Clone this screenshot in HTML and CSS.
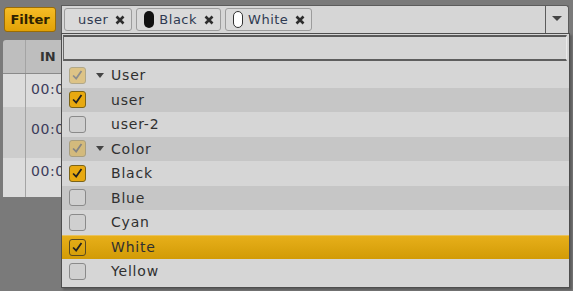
FILE: index.html
```html
<!DOCTYPE html>
<html>
<head>
    <title>Filter</title>
    <link rel="stylesheet" href="styles.css">
</head>
<body>
    <div class="topbar">
        <button class="filter-btn">Filter</button>
        <div class="select-box">
            <div class="tags">
                <span class="tag tag-plain">user <svg class="x" viewBox="0 0 10 10"><path d="M1.5 1.5L8.5 8.5M8.5 1.5L1.5 8.5"/></svg></span>
                <span class="tag"><i class="pill pill-black"></i>Black <svg class="x" viewBox="0 0 10 10"><path d="M1.5 1.5L8.5 8.5M8.5 1.5L1.5 8.5"/></svg></span>
                <span class="tag"><i class="pill pill-white"></i>White <svg class="x" viewBox="0 0 10 10"><path d="M1.5 1.5L8.5 8.5M8.5 1.5L1.5 8.5"/></svg></span>
            </div>
            <div class="arrow"><span class="tri"></span></div>
        </div>
    </div>

    <div class="grid">
        <div class="grid-head">
            <div class="c1"></div>
            <div class="c2">IN</div>
        </div>
        <div class="grid-row r1"><div class="c1"></div><div class="c2">00:00:00</div></div>
        <div class="grid-row r2"><div class="c1"></div><div class="c2">00:00:00</div></div>
        <div class="grid-row r3"><div class="c1"></div><div class="c2">00:00:00</div></div>
    </div>

    <!-- dropdown list, opened over the grid -->
    <div class="dropdown">
        <div class="search"></div>
        <div class="list">
            <div class="row"><span class="cb checked faded"></span><span class="caret"></span><span>User</span></div>
            <div class="row alt"><span class="cb checked"></span><span></span><span>user</span></div>
            <div class="row"><span class="cb"></span><span></span><span>user-2</span></div>
            <div class="row alt"><span class="cb checked faded"></span><span class="caret"></span><span>Color</span></div>
            <div class="row"><span class="cb checked"></span><span></span><span>Black</span></div>
            <div class="row alt"><span class="cb"></span><span></span><span>Blue</span></div>
            <div class="row"><span class="cb"></span><span></span><span>Cyan</span></div>
            <div class="row active"><span class="cb checked"></span><span></span><span>White</span></div>
            <div class="row"><span class="cb"></span><span></span><span>Yellow</span></div>
        </div>
    </div>
</body>
</html>
```

FILE: styles.css
```css
body {
    margin: 0;
    background-color: #7a7a7a;
    font-family: "DejaVu Sans", Verdana, sans-serif;
    height: 291px;
    overflow: hidden;
}

.topbar {
    display: flex;
    align-items: center;
    padding: 5px 0 0 4px;
    gap: 5px;
}

.filter-btn {
    height: 25px;
    width: 52px;
    padding: 0;
    border: 1px solid #9a6c06;
    border-radius: 3px;
    background: linear-gradient(#f5bc26, #e2a206);
    color: #2e2200;
    font-family: "DejaVu Sans", sans-serif;
    font-weight: bold;
    font-size: 13px;
}

.select-box {
    display: flex;
    width: 508px;
    height: 28px;
    box-sizing: border-box;
    border: 1px solid #5c5c5c;
    border-bottom: none;
    border-radius: 0 3px 0 0;
    background-color: #d6d6d6;
}

.tags {
    flex: 1;
    display: flex;
    align-items: center;
    gap: 4px;
    padding-left: 2px;
}

.tag {
    display: flex;
    align-items: center;
    height: 23px;
    box-sizing: border-box;
    padding: 0 6px 0 7px;
    border: 1px solid #9c9c9c;
    border-radius: 3px;
    background-color: #dadada;
    color: #2f3a52;
    font-size: 13px;
    letter-spacing: 0.5px;
}

.tag-plain {
    padding-left: 13px;
}

.pill {
    display: inline-block;
    width: 10px;
    height: 17px;
    box-sizing: border-box;
    border-radius: 5px;
    margin-right: 5px;
}

.pill-black {
    background-color: #111;
}

.pill-white {
    background-color: #fff;
    border: 1.5px solid #333;
}

.x {
    width: 10px;
    height: 10px;
    margin-left: 7px;
    stroke: #2e2e2e;
    stroke-width: 2.6;
}

.arrow {
    width: 23px;
    border-left: 1px solid #5c5c5c;
    display: flex;
    justify-content: center;
    padding-top: 10px;
    box-sizing: border-box;
}

.tri {
    width: 0;
    height: 0;
    border-left: 5px solid transparent;
    border-right: 5px solid transparent;
    border-top: 5px solid #444;
}

/* grid behind the dropdown */
.grid {
    margin: 7px 0 0 3px;
    width: 300px;
}

.grid-head,
.grid-row {
    display: flex;
}

.grid-head {
    height: 33px;
    background-color: #bebebe;
    border-radius: 3px 0 0 0;
    border-bottom: 1px solid #8a8a8a;
    font-weight: bold;
    font-size: 13px;
    color: #333;
}

.c1 {
    width: 22px;
    border-right: 1px solid #a4a4a4;
}

.c2 {
    padding-left: 12px;
}

.grid-head .c2 {
    line-height: 33px;
    padding-left: 14px;
}

.grid-row {
    background-color: #dcdcdc;
    font-size: 14px;
    color: #3b3b5a;
    letter-spacing: 0.6px;
}

.grid-row .c2 {
    padding-left: 5px;
}

.r1 {
    height: 33px;
}

.r1 .c2 {
    padding-top: 7px;
}

.r2 {
    height: 51px;
    background-color: #cdcdcd;
}

.r2 .c2 {
    padding-top: 14px;
}

.r3 {
    height: 39px;
}

.r3 .c2 {
    padding-top: 5px;
}

/* dropdown */
.dropdown {
    position: absolute;
    left: 61px;
    top: 33px;
    width: 509px;
    height: 255px;
    box-sizing: border-box;
    border: 1px solid #4e4e4e;
    background-color: #d6d6d6;
    box-shadow: 2px 2px 2px rgba(0, 0, 0, 0.25);
}

.search {
    height: 26px;
    margin: 1px 2px 2px 1px;
    box-sizing: border-box;
    border: 1px solid #6a6a6a;
    border-top: 2px solid #5a5a5a;
    border-bottom: 2px solid #5e5e5e;
    border-right-color: #eaeaea;
    background-color: #d6d6d6;
}

.row {
    display: grid;
    grid-template-columns: 17px 25px 1fr;
    align-items: center;
    height: 24.5px;
    padding-left: 7px;
    font-size: 14px;
    letter-spacing: 0.8px;
    color: #303030;
}

.row.alt {
    background-color: #c6c6c6;
}

.row.active {
    background: linear-gradient(#e7af1a, #d29b06);
    border-top: 1px solid #e9c25c;
    box-sizing: border-box;
}

.cb {
    width: 17px;
    height: 17px;
    box-sizing: border-box;
    border: 1px solid #8a8a8a;
    border-radius: 3px;
    background-color: #d0d0d0;
}

.cb.checked {
    border-color: #7c6418;
    background-color: #e8a910;
    background-image: url("data:image/svg+xml,%3Csvg xmlns='http://www.w3.org/2000/svg' viewBox='0 0 17 17'%3E%3Cpath d='M3.5 8.5L7 12L13 3.5' fill='none' stroke='%23222' stroke-width='2'/%3E%3C/svg%3E");
}

.cb.faded {
    opacity: 0.4;
}

.row.active .cb {
    background-color: transparent;
    border-color: #5a4a20;
}

.caret {
    justify-self: center;
    margin-left: 2px;
    width: 0;
    height: 0;
    border-left: 4px solid transparent;
    border-right: 4px solid transparent;
    border-top: 5px solid #444;
}
```
